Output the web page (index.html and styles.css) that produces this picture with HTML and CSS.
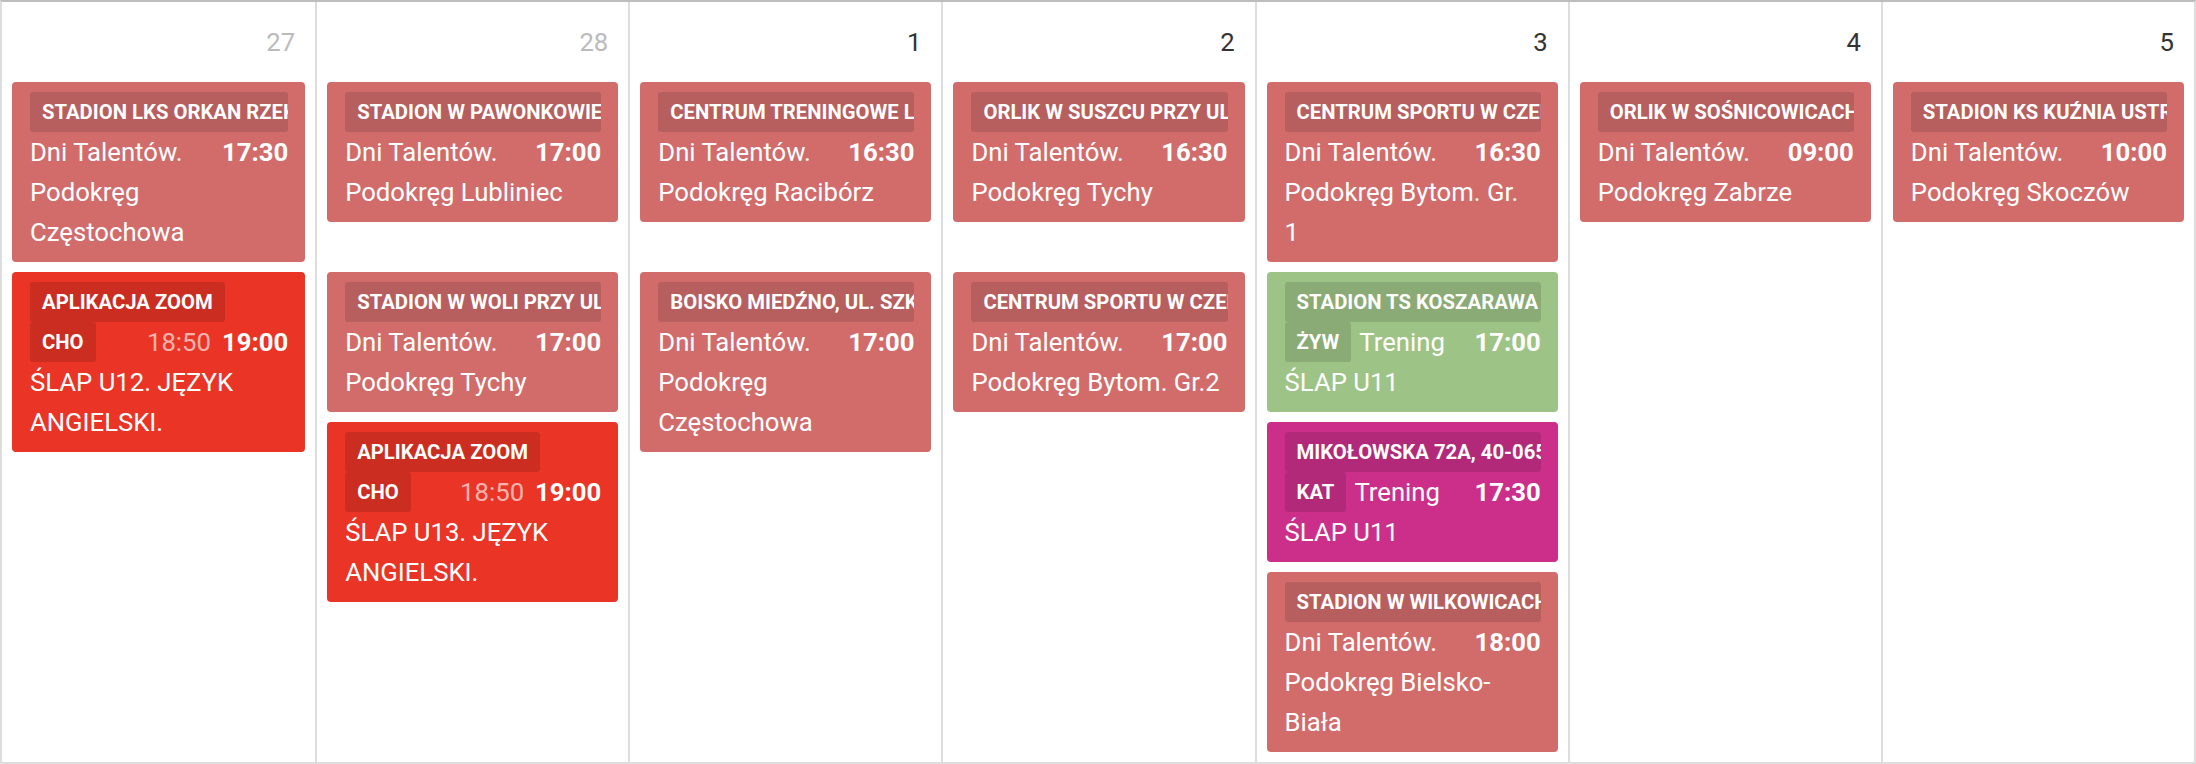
FILE: index.html
```html
<!DOCTYPE html>
<html lang="pl">
<head>
<meta charset="utf-8">
<title>Kalendarz</title>
<link rel="stylesheet" href="styles.css">
</head>
<body>
<div class="cal">
  <table class="week">
    <colgroup>
      <col><col><col><col><col><col><col>
    </colgroup>
    <tr class="nums">
      <td class="num other">27</td>
      <td class="num other">28</td>
      <td class="num">1</td>
      <td class="num">2</td>
      <td class="num">3</td>
      <td class="num">4</td>
      <td class="num">5</td>
    </tr>
    <tr class="lvl">
      <td>
        <div class="ev pink">
          <div class="loc">STADION LKS ORKAN RZEKI</div>
          <div class="row"><span class="title">Dni Talentów.</span><span class="times"><b>17:30</b></span></div>
          <div class="desc">Podokręg Częstochowa</div>
        </div>
      </td>
      <td>
        <div class="ev pink">
          <div class="loc">STADION W PAWONKOWIE</div>
          <div class="row"><span class="title">Dni Talentów.</span><span class="times"><b>17:00</b></span></div>
          <div class="desc">Podokręg Lubliniec</div>
        </div>
      </td>
      <td>
        <div class="ev pink">
          <div class="loc">CENTRUM TRENINGOWE LKS</div>
          <div class="row"><span class="title">Dni Talentów.</span><span class="times"><b>16:30</b></span></div>
          <div class="desc">Podokręg Racibórz</div>
        </div>
      </td>
      <td>
        <div class="ev pink">
          <div class="loc">ORLIK W SUSZCU PRZY UL. SZKOLNEJ</div>
          <div class="row"><span class="title">Dni Talentów.</span><span class="times"><b>16:30</b></span></div>
          <div class="desc">Podokręg Tychy</div>
        </div>
      </td>
      <td>
        <div class="ev pink">
          <div class="loc">CENTRUM SPORTU W CZELADZI</div>
          <div class="row"><span class="title">Dni Talentów.</span><span class="times"><b>16:30</b></span></div>
          <div class="desc">Podokręg Bytom. Gr. 1</div>
        </div>
      </td>
      <td>
        <div class="ev pink">
          <div class="loc">ORLIK W SOŚNICOWICACH</div>
          <div class="row"><span class="title">Dni Talentów.</span><span class="times"><b>09:00</b></span></div>
          <div class="desc">Podokręg Zabrze</div>
        </div>
      </td>
      <td>
        <div class="ev pink">
          <div class="loc">STADION KS KUŹNIA USTROŃ</div>
          <div class="row"><span class="title">Dni Talentów.</span><span class="times"><b>10:00</b></span></div>
          <div class="desc">Podokręg Skoczów</div>
        </div>
      </td>
    </tr>
    <tr class="rest">
      <td>
        <div class="ev red">
          <div class="loc">APLIKACJA ZOOM</div>
          <div class="row"><span class="cat">CHO</span><span class="times"><span class="meet">18:50</span><b>19:00</b></span></div>
          <div class="desc">ŚLAP U12. JĘZYK ANGIELSKI.</div>
        </div>
      </td>
      <td>
        <div class="ev pink">
          <div class="loc">STADION W WOLI PRZY UL. POWSTAŃCÓW</div>
          <div class="row"><span class="title">Dni Talentów.</span><span class="times"><b>17:00</b></span></div>
          <div class="desc">Podokręg Tychy</div>
        </div>
        <div class="ev red">
          <div class="loc">APLIKACJA ZOOM</div>
          <div class="row"><span class="cat">CHO</span><span class="times"><span class="meet">18:50</span><b>19:00</b></span></div>
          <div class="desc">ŚLAP U13. JĘZYK ANGIELSKI.</div>
        </div>
      </td>
      <td>
        <div class="ev pink">
          <div class="loc">BOISKO MIEDŹNO, UL. SZKOLNA</div>
          <div class="row"><span class="title">Dni Talentów.</span><span class="times"><b>17:00</b></span></div>
          <div class="desc">Podokręg Częstochowa</div>
        </div>
      </td>
      <td>
        <div class="ev pink">
          <div class="loc">CENTRUM SPORTU W CZELADZI</div>
          <div class="row"><span class="title">Dni Talentów.</span><span class="times"><b>17:00</b></span></div>
          <div class="desc">Podokręg Bytom. Gr.2</div>
        </div>
      </td>
      <td>
        <div class="ev green">
          <div class="loc">STADION TS KOSZARAWA</div>
          <div class="row"><span class="cat">ŻYW</span><span class="title">Trening</span><span class="times"><b>17:00</b></span></div>
          <div class="desc">ŚLAP U11</div>
        </div>
        <div class="ev magenta">
          <div class="loc">MIKOŁOWSKA 72A, 40-065 KATOWICE</div>
          <div class="row"><span class="cat">KAT</span><span class="title">Trening</span><span class="times"><b>17:30</b></span></div>
          <div class="desc">ŚLAP U11</div>
        </div>
        <div class="ev pink">
          <div class="loc">STADION W WILKOWICACH</div>
          <div class="row"><span class="title">Dni Talentów.</span><span class="times"><b>18:00</b></span></div>
          <div class="desc">Podokręg Bielsko-Biała</div>
        </div>
      </td>
      <td></td>
      <td></td>
    </tr>
  </table>
</div>
</body>
</html>
```

FILE: styles.css
```css
* {
  box-sizing: border-box;
}

html, body {
  margin: 0;
  padding: 0;
  background: #ffffff;
}

body {
  font-family: Roboto, "Noto Sans", "Liberation Sans", sans-serif;
  color: #333333;
}

.cal {
  width: 2196px;
  border: 2px solid #dddddd;
  border-top-color: #bdbdbd;
}

.week {
  width: 100%;
  table-layout: fixed;
  border-collapse: separate;
  border-spacing: 0;
}

.week td {
  padding: 0 10px;
  vertical-align: top;
  border-left: 2px solid #dddddd;
}

.week td:first-child {
  border-left: none;
}

.nums td {
  height: 80px;
  vertical-align: middle;
  text-align: right;
  padding-right: 20px;
  font-size: 25.7px;
  line-height: 30px;
  color: #333333;
}

.nums td.other {
  color: #bbbbbb;
}

.lvl td {
  padding-bottom: 10px;
}

.rest td .ev {
  margin-bottom: 10px;
}

.ev {
  border-radius: 4px;
  padding: 10px 17px 10px 18px;
  color: #ffffff;
  font-size: 25.7px;
  line-height: 40px;
}

.ev.pink {
  background: #d16c6b;
}

.ev.red {
  background: #e93426;
}

.ev.green {
  background: #9ec386;
}

.ev.magenta {
  background: #cc2f8a;
}

.loc,
.cat {
  background: rgba(0, 0, 0, 0.12);
  border-radius: 3px;
  font-size: 20.3px;
  font-weight: 700;
  text-transform: uppercase;
  height: 40px;
  line-height: 40px;
  padding: 0 12px;
  white-space: nowrap;
}

.loc {
  width: fit-content;
  max-width: 100%;
  overflow: hidden;
}

.row {
  display: flex;
  align-items: center;
  height: 40px;
  white-space: nowrap;
}

.cat {
  flex: none;
  margin-right: 8px;
}

.title {
  flex: none;
}

.times {
  margin-left: auto;
  display: flex;
  gap: 11px;
}

.times b {
  font-weight: 700;
}

.meet {
  color: rgba(255, 255, 255, 0.65);
}

.desc {
  line-height: 40px;
  padding-right: 7px;
}
```
